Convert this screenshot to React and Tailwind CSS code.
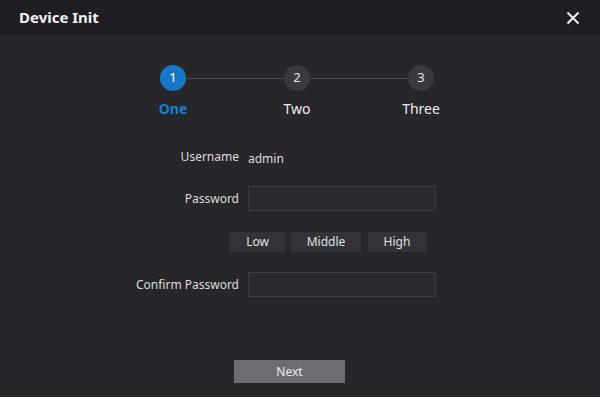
import React from 'react';

const steps = [
  { n: 1, label: 'One', active: true },
  { n: 2, label: 'Two' },
  { n: 3, label: 'Three' },
];

const Stepper = () => (
  <div className="flex items-start pl-[160px] mt-[30px]">
    {steps.map((s, i) => (
      <React.Fragment key={s.n}>
        <div className="w-[26px] flex flex-col items-center">
          <div
            className={`w-[26px] h-[26px] rounded-full flex items-center justify-center text-[13px] ${
              s.active ? 'bg-[#1677c5] text-white' : 'bg-[#3a393e] text-[#e6e6e6]'
            }`}
          >
            {s.n}
          </div>
          <div
            className={`mt-[8px] whitespace-nowrap text-[14px] leading-[20px] ${
              s.active ? 'text-[#1a7fd0] font-bold' : 'text-[#ececec]'
            }`}
          >
            {s.label}
          </div>
        </div>
        {i < steps.length - 1 && <div className="w-[98px] h-px bg-[#4a494e] mt-[13px]" />}
      </React.Fragment>
    ))}
  </div>
);

const Row = ({ label, children, className = '' }) => (
  <div className={`flex items-center ${className}`}>
    <div className="w-[239px] text-right text-[12px] text-[#dcdcdc]">{label}</div>
    <div className="ml-[9px]">{children}</div>
  </div>
);

const Input = () => (
  <div className="w-[188px] h-[25px] bg-[#2b2a2f] border border-[#3d3c41]" />
);

export default function App() {
  return (
    <div className="w-[600px] h-[399px] bg-white" style={{ fontFamily: '"Noto Sans", "Open Sans", sans-serif' }}>
      <div className="w-[600px] h-[397px] bg-[#27262b] flex flex-col">
        {/* header */}
        <div className="h-[35px] bg-[#1f1e23] flex items-center justify-between pl-[19px] pr-[20px]">
          <div className="text-[15px] font-bold text-[#f2f2f2]">Device Init</div>
          <svg width="14" height="14" viewBox="0 0 14 14">
            <path d="M1.5 1.5 L12.5 12.5 M12.5 1.5 L1.5 12.5" stroke="#f2f2f2" strokeWidth="2" />
          </svg>
        </div>

        <Stepper />

        {/* form */}
        <div className="mt-[26px] flex flex-col">
          <Row label="Username">
            <span className="text-[12px] text-[#dcdcdc]">admin</span>
          </Row>
          <Row label="Password" className="mt-[17px]">
            <Input />
          </Row>
          <div className="flex mt-[21px] pl-[230px] gap-[6px]">
            <div className="w-[55px] h-[20px] bg-[#333237] text-[12px] text-[#e0e0e0] flex items-center justify-center">Low</div>
            <div className="w-[70px] h-[20px] bg-[#333237] text-[12px] text-[#e0e0e0] flex items-center justify-center">Middle</div>
            <div className="w-[58px] h-[20px] ml-px bg-[#333237] text-[12px] text-[#e0e0e0] flex items-center justify-center">High</div>
          </div>
          <Row label="Confirm Password" className="mt-[20px]">
            <Input />
          </Row>
        </div>

        <div className="mt-[63px] pl-[234px]">
          <button className="w-[111px] h-[23px] bg-[#6d6c71] text-[12px] text-[#ececec] flex items-center justify-center">
            Next
          </button>
        </div>
      </div>
    </div>
  );
}
